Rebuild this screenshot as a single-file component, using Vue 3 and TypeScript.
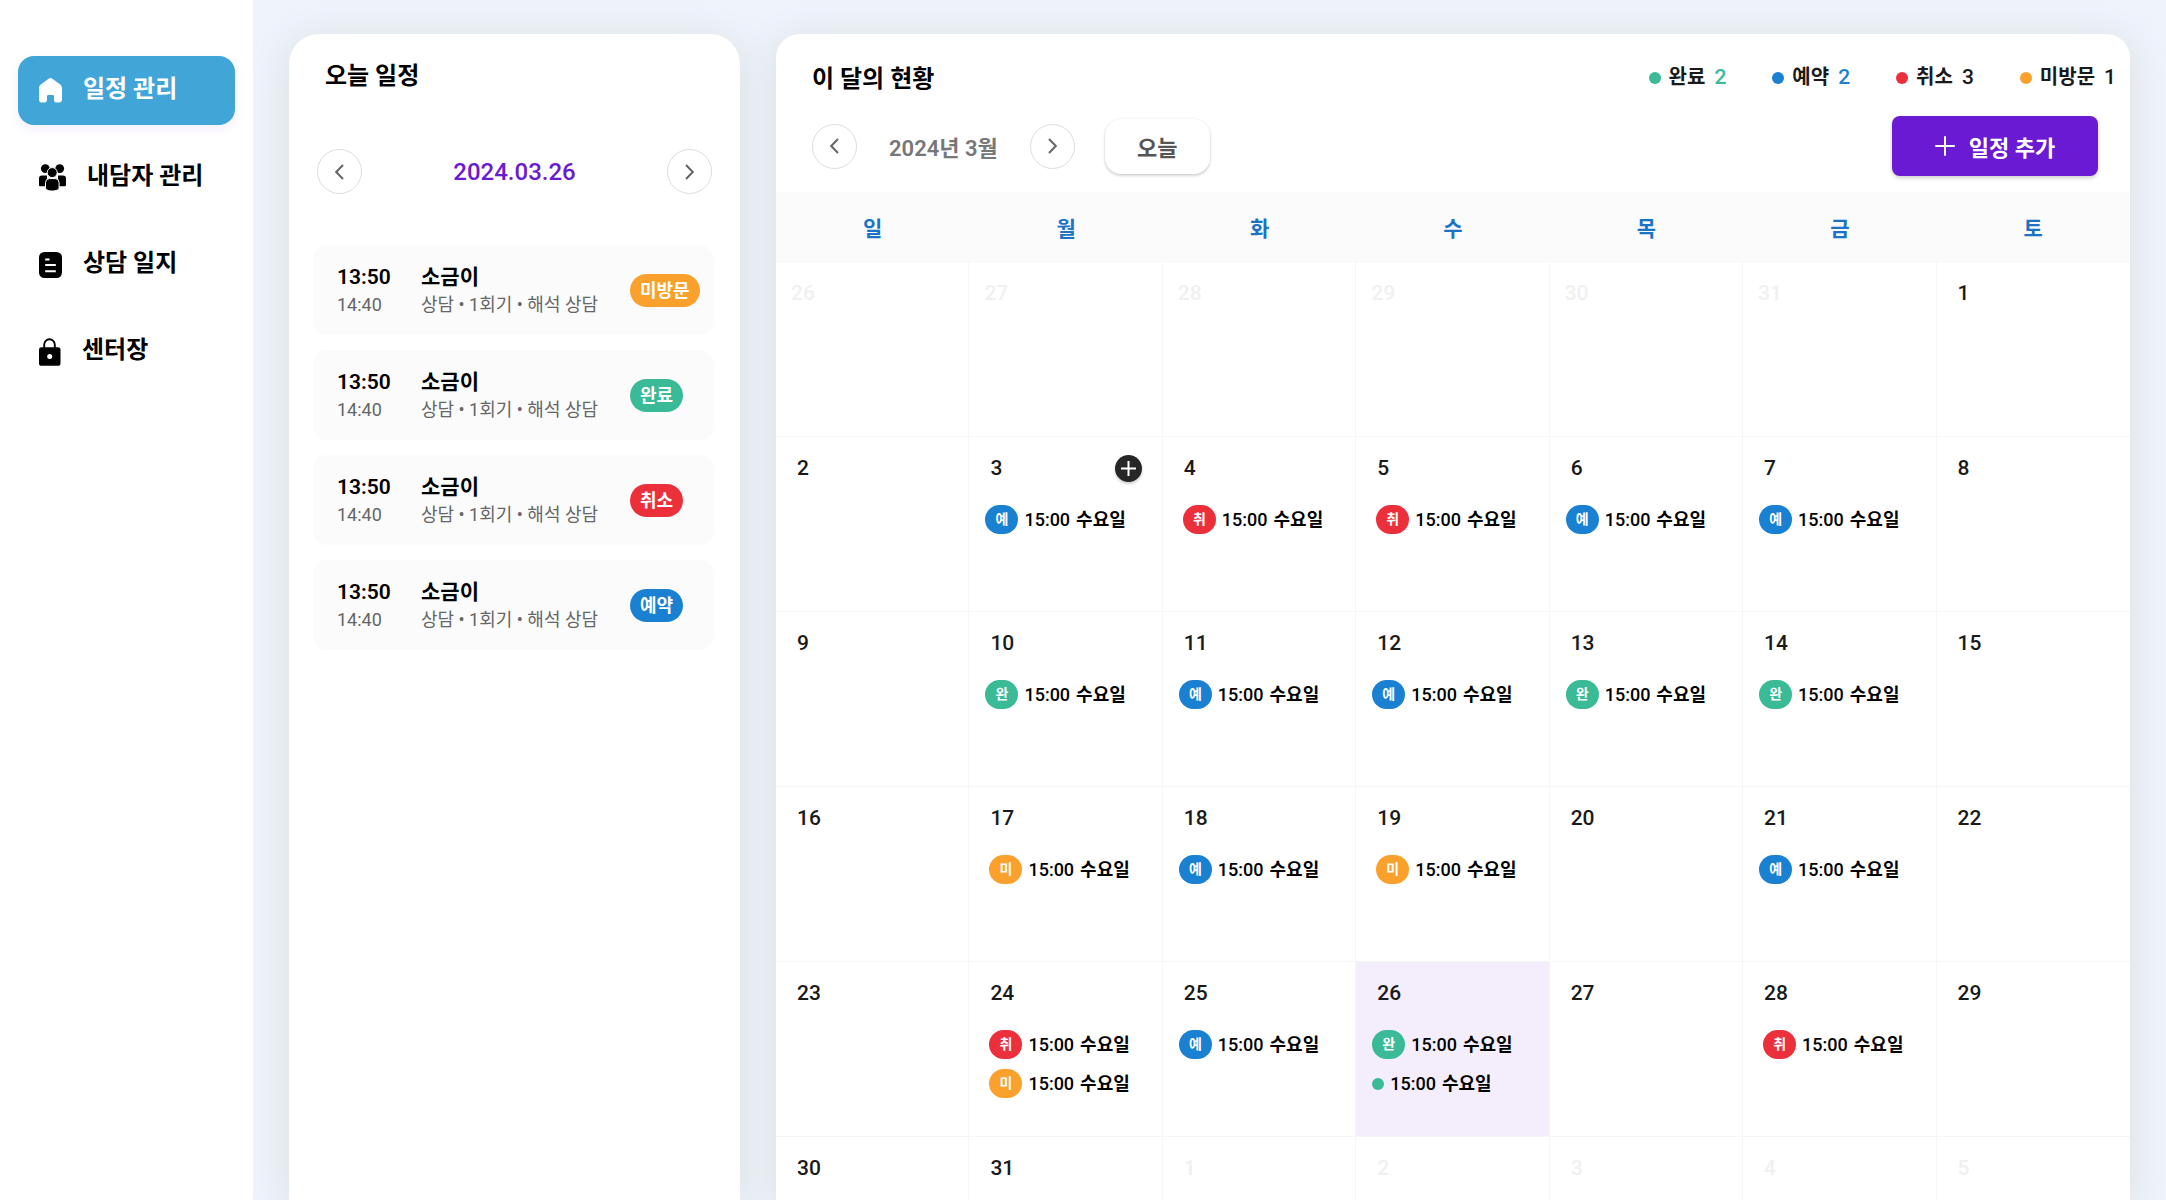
<script setup lang="ts">
type Status = 'done' | 'booked' | 'cancelled' | 'noshow'

interface CalendarEvent {
  status: Status
  compact?: boolean
}

interface Day {
  date: number
  outside?: 'previous' | 'next'
  today?: boolean
  addable?: boolean
  events: CalendarEvent[]
}

const labels: Record<Status, string> = {
  done: '완료',
  booked: '예약',
  cancelled: '취소',
  noshow: '미방문',
}

const menu = [
  { icon: 'home', label: '일정 관리', active: true },
  { icon: 'people', label: '내담자 관리', active: false },
  { icon: 'journal', label: '상담 일지', active: false },
  { icon: 'lock', label: '센터장', active: false },
]

const appointments: Status[] = ['noshow', 'done', 'cancelled', 'booked']

const summary: { status: Status; count: number }[] = [
  { status: 'done', count: 2 },
  { status: 'booked', count: 2 },
  { status: 'cancelled', count: 3 },
  { status: 'noshow', count: 1 },
]

const weekdays = ['일', '월', '화', '수', '목', '금', '토']

const events: Record<number, CalendarEvent[]> = {
  3: [{ status: 'booked' }],
  4: [{ status: 'cancelled' }],
  5: [{ status: 'cancelled' }],
  6: [{ status: 'booked' }],
  7: [{ status: 'booked' }],
  10: [{ status: 'done' }],
  11: [{ status: 'booked' }],
  12: [{ status: 'booked' }],
  13: [{ status: 'done' }],
  14: [{ status: 'done' }],
  17: [{ status: 'noshow' }],
  18: [{ status: 'booked' }],
  19: [{ status: 'noshow' }],
  21: [{ status: 'booked' }],
  24: [{ status: 'cancelled' }, { status: 'noshow' }],
  25: [{ status: 'booked' }],
  26: [{ status: 'done' }, { status: 'done', compact: true }],
  28: [{ status: 'cancelled' }],
}

const days: Day[] = [
  ...[26, 27, 28, 29, 30, 31].map((date): Day => ({ date, outside: 'previous', events: [] })),
  ...Array.from({ length: 31 }, (_, i): Day => ({
    date: i + 1,
    today: i + 1 === 26,
    addable: i + 1 === 3,
    events: events[i + 1] ?? [],
  })),
  ...[1, 2, 3, 4, 5].map((date): Day => ({ date, outside: 'next', events: [] })),
]

const weeks: Day[][] = Array.from({ length: 6 }, (_, i) => days.slice(i * 7, i * 7 + 7))
</script>

<template>
  <div class="app">
    <nav class="sidebar">
      <a v-for="item in menu" :key="item.label" href="#" class="nav-item" :class="{ active: item.active }">
        <svg v-if="item.icon === 'home'" width="23" height="25" viewBox="0 0 23 25">
          <path fill="currentColor" d="M9.6.7a3.2 3.2 0 0 1 3.8 0l7.8 5.7A4.2 4.2 0 0 1 23 9.8v11.4a3.4 3.4 0 0 1-3.4 3.4h-1.4a3.2 3.2 0 0 1-3.2-3.2v-3.2a1.2 1.2 0 0 0-1.2-1.2H9.2a1.2 1.2 0 0 0-1.2 1.2v3.2a3.2 3.2 0 0 1-3.2 3.2H3.4A3.4 3.4 0 0 1 0 21.2V9.8a4.2 4.2 0 0 1 1.8-3.4z" />
        </svg>
        <svg v-else-if="item.icon === 'people'" width="27" height="27" viewBox="0 0 27 27">
          <g fill="currentColor">
            <circle cx="6.3" cy="4.6" r="4.4" />
            <circle cx="20.7" cy="4.6" r="4.4" />
            <path d="M0 14.5a3 3 0 0 1 3-3h5v10.7H1.2A1.2 1.2 0 0 1 0 21zM27 14.5a3 3 0 0 0-3-3h-5v10.7h6.8A1.2 1.2 0 0 0 27 21z" />
          </g>
          <g class="front">
            <circle cx="13.2" cy="8.6" r="5" />
            <path d="M6.5 18.6a4 4 0 0 1 4-4h5.6a4 4 0 0 1 4 4v5.2c0 2-2.9 3.2-6.8 3.2s-6.8-1.2-6.8-3.2z" />
          </g>
        </svg>
        <svg v-else-if="item.icon === 'journal'" width="23" height="26" viewBox="0 0 23 26">
          <rect width="23" height="26" rx="5.5" fill="currentColor" />
          <path class="lines" d="M6.2 7.5h4.300M6.2 13h10.600M6.2 19.2h10.600" />
        </svg>
        <svg v-else width="22" height="28" viewBox="0 0 22 28">
          <path d="M5.2 10V6.600a5.3 5.3 0 0 1 10.600 0V10" fill="none" stroke="currentColor" stroke-width="1.9" />
          <rect y="9.2" width="21.5" height="18.6" rx="2.6" fill="currentColor" />
          <circle cx="10.7" cy="18.6" r="2.5" fill="#fff" />
        </svg>
        <span>{{ item.label }}</span>
      </a>
    </nav>

    <main class="main">
      <section class="panel today">
        <h2 class="title">오늘 일정</h2>
        <div class="date-nav">
          <button type="button" class="round" aria-label="이전 날">
            <svg width="9" height="16" viewBox="0 0 9 16"><path d="M8 1 1.2 8 8 15" /></svg>
          </button>
          <strong class="date">2024.03.26</strong>
          <button type="button" class="round" aria-label="다음 날">
            <svg width="9" height="16" viewBox="0 0 9 16"><path d="M1 1l6.8 7L1 15" /></svg>
          </button>
        </div>
        <ul class="cards">
          <li v-for="status in appointments" :key="status" class="card">
            <div class="times">
              <strong>13:50</strong>
              <span>14:40</span>
            </div>
            <div class="info">
              <strong>소금이</strong>
              <span>상담 • 1회기 • 해석 상담</span>
            </div>
            <span class="badge" :class="status">{{ labels[status] }}</span>
          </li>
        </ul>
      </section>

      <section class="panel month">
        <header class="month-head">
          <h2 class="title">이 달의 현황</h2>
          <ul class="legend">
            <li v-for="item in summary" :key="item.status">
              <i class="dot" :class="item.status"></i>
              <span class="legend-label">{{ labels[item.status] }}</span>
              <span class="count" :class="'count-' + item.status">{{ item.count }}</span>
            </li>
          </ul>
        </header>
        <div class="toolbar">
          <button type="button" class="round" aria-label="이전 달">
            <svg width="9" height="16" viewBox="0 0 9 16"><path d="M8 1 1.2 8 8 15" /></svg>
          </button>
          <span class="month-name">2024년 3월</span>
          <button type="button" class="round" aria-label="다음 달">
            <svg width="9" height="16" viewBox="0 0 9 16"><path d="M1 1l6.8 7L1 15" /></svg>
          </button>
          <button type="button" class="today-button">오늘</button>
          <button type="button" class="add-button">
            <svg width="20" height="20" viewBox="0 0 20 20"><path d="M10 1v18M1 10h18" /></svg>
            일정 추가
          </button>
        </div>
        <table class="calendar">
          <thead>
            <tr>
              <th v-for="name in weekdays" :key="name" scope="col">{{ name }}</th>
            </tr>
          </thead>
          <tbody>
            <tr v-for="(week, w) in weeks" :key="w">
              <td v-for="day in week" :key="day.date" :class="[day.outside, { selected: day.today }]">
                <div class="day-head">
                  <span>{{ day.date }}</span>
                  <button v-if="day.addable" type="button" class="add-day" aria-label="일정 추가">
                    <svg width="17" height="17" viewBox="0 0 17 17"><path d="M8.5 1v15M1 8.5h15" /></svg>
                  </button>
                </div>
                <ul v-if="day.events.length" class="events">
                  <li v-for="(event, e) in day.events" :key="e" class="event" :class="'event-' + event.status">
                    <i v-if="event.compact" class="dot" :class="event.status"></i>
                    <span v-else class="mark" :class="event.status">{{ labels[event.status][0] }}</span>
                    <time>15:00</time>
                    <span class="event-name">수요일</span>
                  </li>
                </ul>
              </td>
            </tr>
          </tbody>
        </table>
      </section>
    </main>
  </div>
</template>

<style>
body {
  margin: 0;
  background: #eef3fc;
}
</style>

<style scoped>
.app {
  display: flex;
  height: 100vh;
  overflow: hidden;
  font-family: Roboto, 'Noto Sans CJK KR', sans-serif;
  color: #000;
}

h2,
ul {
  margin: 0;
  padding: 0;
  list-style: none;
}

button {
  padding: 0;
  border: 0;
  font: inherit;
  cursor: pointer;
}

svg {
  display: block;
  flex: none;
}

.sidebar {
  display: flex;
  flex: none;
  flex-direction: column;
  gap: 18px;
  box-sizing: border-box;
  width: 253px;
  padding: 56px 18px;
  background: #fff;
}

.nav-item {
  display: flex;
  align-items: center;
  gap: 21px;
  height: 69px;
  padding: 0 21px;
  border-radius: 16px;
  color: #000;
  font-size: 24px;
  font-weight: 700;
  line-height: 32px;
  text-decoration: none;
}

.nav-item span {
  padding-bottom: 3px;
}

.nav-item.active {
  background: #41a5d8;
  color: #fff;
  box-shadow: 0 4px 12px rgba(106, 26, 210, 0.08);
}

.front {
  fill: currentColor;
  stroke: #fff;
  stroke-width: 1;
}

.lines {
  fill: none;
  stroke: #fff;
  stroke-width: 2;
}

.main {
  display: flex;
  flex: 1;
  gap: 36px;
  min-width: 0;
  padding: 34px 36px 0;
  background: #eef3fc;
}

.panel {
  box-sizing: border-box;
  background: #fff;
  box-shadow: 0 6px 36px rgba(209, 217, 212, 0.75);
}

.today {
  flex: none;
  width: 451px;
  padding: 25px 26px 0 24px;
  border-radius: 30px 30px 0 0;
}

.title {
  font-size: 24px;
  font-weight: 700;
  line-height: 34px;
}

.today .title {
  padding-left: 12px;
}

.date-nav {
  display: flex;
  align-items: center;
  justify-content: space-between;
  margin: 56px 2px 51px 4px;
}

.round {
  display: grid;
  place-items: center;
  box-sizing: border-box;
  width: 45px;
  height: 45px;
  border: 1px solid #ddd;
  border-radius: 50%;
  background: #fff;
}

.round path {
  fill: none;
  stroke: #666;
  stroke-width: 2;
}

.date {
  color: #6a1ad2;
  font-size: 24px;
  font-weight: 500;
}

.cards {
  display: grid;
  gap: 15px;
}

.card {
  display: flex;
  align-items: center;
  height: 90px;
  padding-left: 24px;
  border-radius: 14px;
  background: #fbfbfb;
}

.times,
.info {
  display: grid;
  padding-top: 2px;
  line-height: 28px;
}

.times {
  width: 84px;
}

.info {
  width: 209px;
}

.card strong {
  font-size: 21px;
  font-weight: 600;
}

.info strong {
  font-weight: 700;
}

.times span,
.info span {
  color: #666;
  font-size: 18px;
  font-weight: 400;
  white-space: nowrap;
}

.badge {
  padding: 0 10px;
  border-radius: 17px;
  color: #fff;
  font-size: 18px;
  font-weight: 700;
  line-height: 33px;
}

.done {
  background: #3aba96;
}

.booked {
  background: #1a80d2;
}

.cancelled {
  background: #eb303c;
}

.noshow {
  background: #f9a12c;
}

.month {
  flex: 1;
  min-width: 0;
  border-radius: 24px 24px 0 0;
}

.month-head {
  display: flex;
  align-items: flex-start;
  justify-content: space-between;
  padding: 28px 14px 0 36px;
}

.legend {
  display: flex;
  gap: 46px;
  color: #1a1a1a;
  font-size: 21px;
  font-weight: 500;
  line-height: 31px;
}

.legend li {
  display: flex;
  align-items: center;
}

.legend-label {
  margin: 0 9px 0 8px;
  font-size: 20px;
  font-weight: 700;
}

.dot {
  flex: none;
  width: 12px;
  height: 12px;
  border-radius: 50%;
}

.count-done {
  color: #3aba96;
}

.count-booked {
  color: #1a80d2;
}

.toolbar {
  display: flex;
  align-items: center;
  height: 60px;
  padding: 0 32px 0 36px;
  margin: 20px 0 16px;
}

.month-name {
  padding: 0 32px;
  color: #777;
  font-size: 22px;
  font-weight: 600;
}

.today-button {
  width: 105px;
  height: 55px;
  margin-left: 30px;
  border-radius: 16px;
  background: #fff;
  box-shadow: 0 0 2px rgba(0, 0, 0, 0.12), 0 2px 3px rgba(0, 0, 0, 0.16);
  color: #555;
  font-size: 22px;
  font-weight: 700;
}

.add-button {
  display: flex;
  align-items: center;
  justify-content: center;
  gap: 14px;
  width: 206px;
  height: 60px;
  margin-left: auto;
  border-radius: 8px;
  background: #6a1ad2;
  box-shadow: 0 2px 4px rgba(0, 0, 0, 0.2);
  color: #fff;
  font-size: 22px;
  font-weight: 700;
}

.add-button path {
  fill: none;
  stroke: #fff;
  stroke-width: 2;
  stroke-linecap: round;
}

.calendar {
  width: 100%;
  border-collapse: separate;
  border-spacing: 0;
  table-layout: fixed;
}

.calendar th {
  height: 69px;
  padding: 0;
  border-bottom: 1px solid #f6f6f6;
  background: #fbfbfb;
  color: #1a73c4;
  font-size: 21px;
  font-weight: 700;
}

.calendar td {
  box-sizing: border-box;
  height: 175px;
  padding: 17px 20px 0 21px;
  border-right: 1px solid #f6f6f6;
  border-bottom: 1px solid #f6f6f6;
  color: #1a1a1a;
  font-size: 21px;
  font-weight: 500;
  vertical-align: top;
}

.calendar td:last-child {
  border-right: 0;
}

.calendar td.previous {
  padding-left: 15px;
}

.calendar td.previous,
.calendar td.next {
  color: #f0f0f0;
}

.calendar td.selected {
  background: #f4eefc;
}

.day-head {
  display: flex;
  align-items: center;
  justify-content: space-between;
  height: 28px;
}

.add-day {
  display: grid;
  place-items: center;
  width: 27px;
  height: 27px;
  border-radius: 50%;
  background: #262626;
  box-shadow: 0 2px 3px rgba(0, 0, 0, 0.2);
}

.add-day path {
  fill: none;
  stroke: #fff;
  stroke-width: 2;
}

.events {
  display: grid;
  gap: 10px;
  margin: 23px -16px 0 -5px;
}

.event {
  display: flex;
  align-items: center;
  gap: 6px;
  color: #000;
  font-size: 18px;
  font-weight: 500;
  line-height: 29px;
  white-space: nowrap;
}

.event-name {
  font-weight: 700;
}

.event-cancelled,
.event-noshow {
  padding-left: 4px;
}

.mark {
  width: 33px;
  border-radius: 15px;
  color: #fff;
  font-size: 14px;
  font-weight: 700;
  text-align: center;
}
</style>
